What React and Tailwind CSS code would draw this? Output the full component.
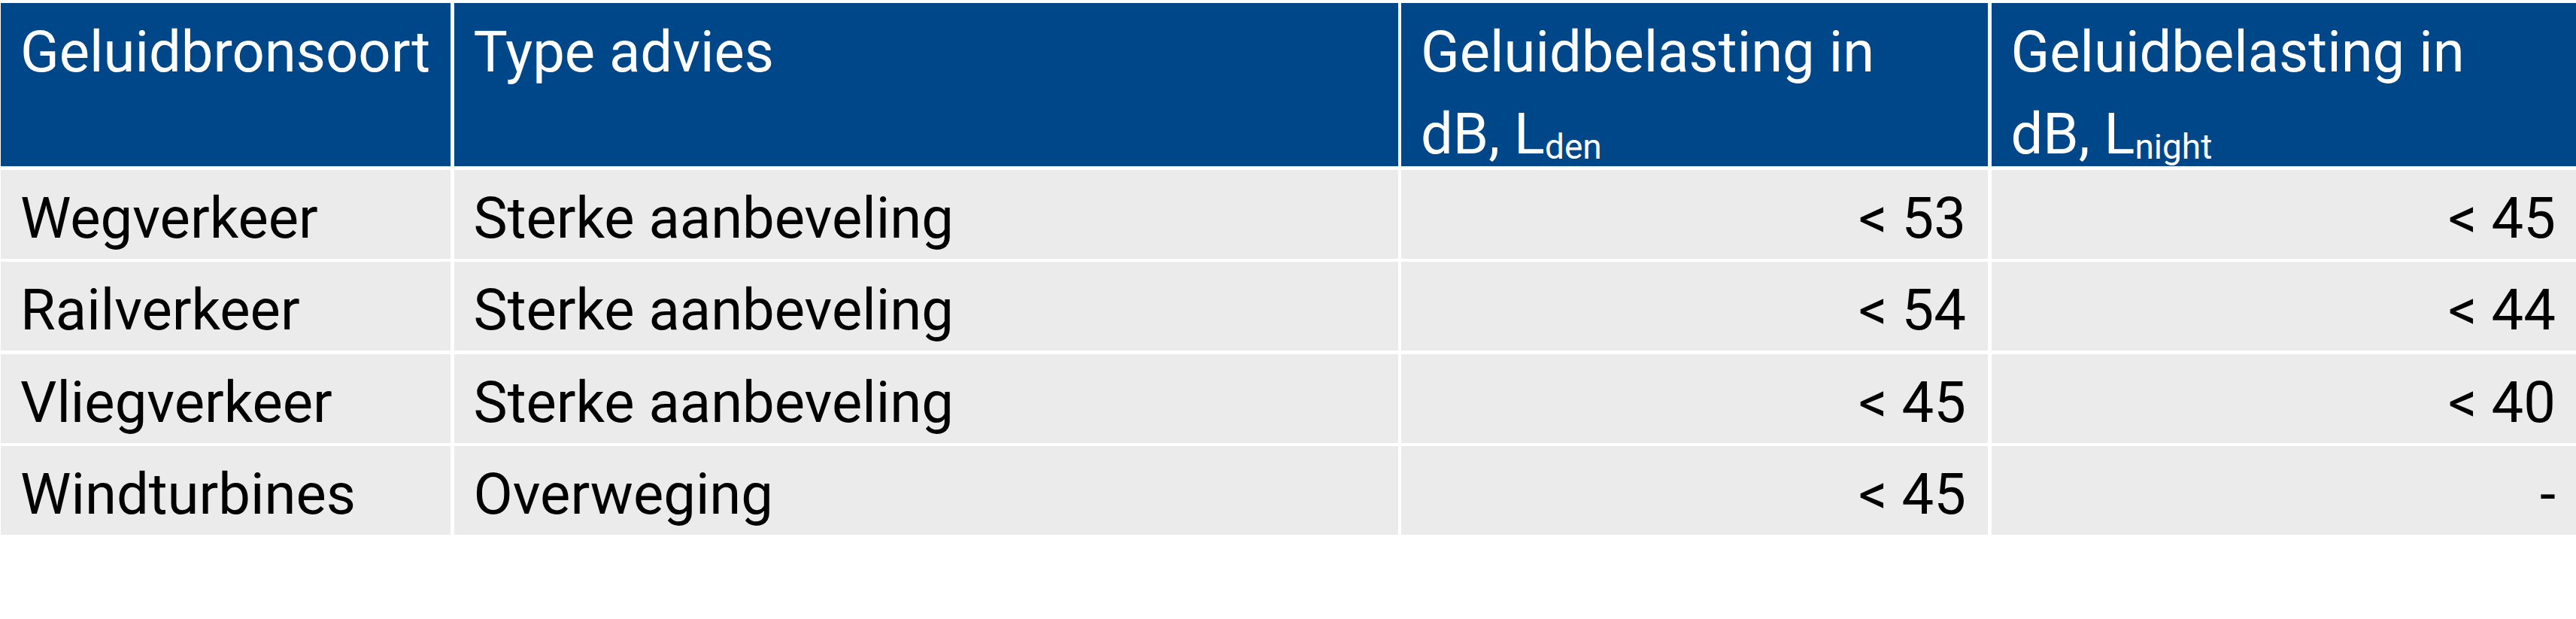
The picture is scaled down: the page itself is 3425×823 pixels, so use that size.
import React from "react";

const rows = [
  ["Wegverkeer", "Sterke aanbeveling", "< 53", "< 45"],
  ["Railverkeer", "Sterke aanbeveling", "< 54", "< 44"],
  ["Vliegverkeer", "Sterke aanbeveling", "< 45", "< 40"],
  ["Windturbines", "Overweging", "< 45", "-"],
];

function HeadCell({ children }) {
  return (
    <div className="bg-[#00478a] text-white pl-[26px] pr-[28px] pt-[10.5px] leading-[109px] overflow-hidden">
      {children}
    </div>
  );
}

export default function App() {
  return (
    <div
      className="w-[3425px] h-[823px] bg-white pt-[4px] pl-[1px] text-[76px]"
      style={{ fontFamily: "Roboto, 'Liberation Sans', sans-serif" }}
    >
      <div className="grid grid-cols-[598px_1255px_780px_1fr] grid-rows-[217px_118px_118px_118px_118px] gap-x-[4.5px] gap-y-[4.5px]">
        <HeadCell>Geluidbronsoort</HeadCell>
        <HeadCell>Type advies</HeadCell>
        <HeadCell>
          Geluidbelasting in
          <br />
          dB, L
          <span className="text-[46px] leading-none relative top-[7px]">den</span>
        </HeadCell>
        <HeadCell>
          Geluidbelasting in
          <br />
          dB, L
          <span className="text-[46px] leading-none relative top-[7px]">night</span>
        </HeadCell>
        {rows.map((r, i) => (
          <React.Fragment key={i}>
            <div className="bg-[#ebebeb] text-black pl-[26px] pt-[19px] leading-[91px] whitespace-nowrap">{r[0]}</div>
            <div className="bg-[#ebebeb] text-black pl-[26px] pt-[19px] leading-[91px] whitespace-nowrap">{r[1]}</div>
            <div className="bg-[#ebebeb] text-black pr-[29px] pt-[19px] leading-[91px] text-right whitespace-nowrap">{r[2]}</div>
            <div className="bg-[#ebebeb] text-black pr-[27px] pt-[19px] leading-[91px] text-right whitespace-nowrap">{r[3]}</div>
          </React.Fragment>
        ))}
      </div>
    </div>
  );
}
